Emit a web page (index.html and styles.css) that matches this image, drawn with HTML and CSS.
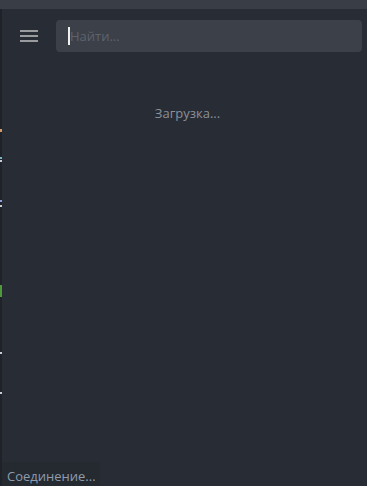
FILE: index.html
```html
<!DOCTYPE html>
<html lang="ru">
<head>
<meta charset="utf-8">
<link rel="stylesheet" href="styles.css">
</head>
<body>
<div class="app">
  <div class="topbar"></div>
  <div class="main">
    <div class="strip">
      <span class="mark m1"></span>
      <span class="mark m2"></span>
      <span class="mark m3"></span>
      <span class="mark m4"></span>
      <span class="mark m5"></span>
      <span class="mark m6 green"></span>
      <span class="mark m7"></span>
      <span class="mark m8"></span>
    </div>
    <div class="panel">
      <div class="header">
        <button class="menu" aria-label="menu">
          <span></span><span></span><span></span>
        </button>
        <div class="search">
          <span class="caret"></span>
          <span class="placeholder">Найти...</span>
        </div>
      </div>
      <div class="loading">Загрузка...</div>
    </div>
  </div>
  <div class="status">Соединение...</div>
</div>
</body>
</html>
```
FILE: styles.css
```css
html, body {
  margin: 0;
  padding: 0;
  background: #282c34;
  font-family: "Open Sans", "Noto Sans", sans-serif;
}
.app {
  position: relative;
  width: 367px;
  height: 486px;
  display: flex;
  flex-direction: column;
  overflow: hidden;
}
.topbar {
  height: 9px;
  background: #383d46;
  flex: none;
}
.main {
  flex: 1;
  display: flex;
}
.strip {
  width: 2px;
  background: #1f2228;
  display: flex;
  flex-direction: column;
}
.mark {
  display: block;
  width: 2px;
  height: 2px;
  background: #c8ccd4;
}
.m1 { margin-top: 120px; background: #d19a66; height: 3px; }
.m2 { margin-top: 25px; background: #7fb4c7; }
.m3 { margin-top: 1px; }
.m4 { margin-top: 38px; background: #8aa0e0; }
.m5 { margin-top: 3px; }
.green { margin-top: 78px; background: #4e9a3a; height: 12px; }
.m7 { margin-top: 55px; }
.m8 { margin-top: 38px; }
.panel {
  flex: 1;
  display: flex;
  flex-direction: column;
}
.header {
  display: flex;
  align-items: center;
  padding: 11px 5px 0 18px;
  gap: 18px;
}
.menu {
  width: 18px;
  height: 12px;
  padding: 0;
  border: 0;
  background: transparent;
  display: flex;
  flex-direction: column;
  justify-content: space-between;
}
.menu span {
  display: block;
  height: 2px;
  background: #999b9f;
}
.search {
  flex: 1;
  height: 32px;
  background: #3b4049;
  border-radius: 4px;
  display: flex;
  align-items: center;
  padding-left: 12px;
  box-sizing: border-box;
}
.caret {
  width: 2px;
  height: 18px;
  background: #f0f0f0;
}
.placeholder {
  font-size: 13px;
  color: #5e636c;
}
.loading {
  margin-top: 52px;
  padding-left: 6px;
  text-align: center;
  font-size: 13px;
  color: #8b9099;
  line-height: 18px;
}
.status {
  position: absolute;
  left: 2px;
  bottom: 0;
  width: 98px;
  height: 24px;
  background: #252930;
  box-sizing: border-box;
  padding: 2px 0 0 5px;
  font-size: 13px;
  line-height: 24px;
  color: #8e9cae;
  white-space: nowrap;
}
```
